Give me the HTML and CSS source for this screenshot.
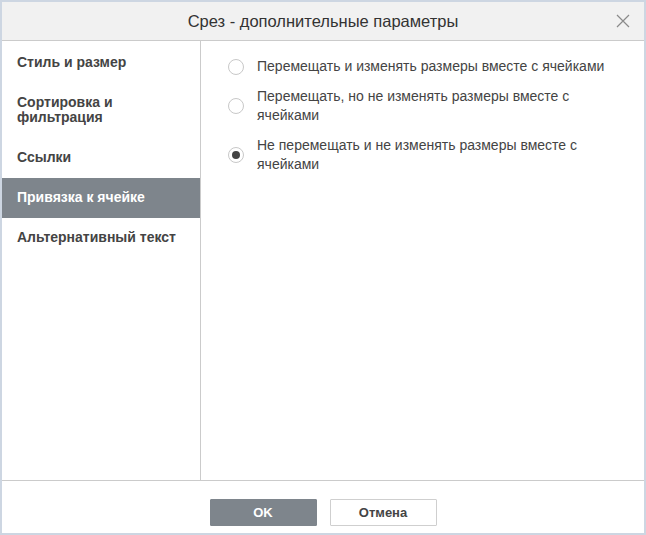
FILE: index.html
```html
<!DOCTYPE html>
<html lang="ru">

<head>
    <meta charset="UTF-8">
    <meta name="viewport" content="width=device-width, initial-scale=1.0">
    <title>Срез - дополнительные параметры</title>
    <link rel="stylesheet" href="styles.css">
</head>

<body>
    <div class="window">
        <div class="header">
            <span class="title">Срез - дополнительные параметры</span>
            <span class="close">
                <svg width="14" height="14" viewBox="0 0 14 14">
                    <path d="M1 1 L13 13 M13 1 L1 13" stroke="#8a8a8a" stroke-width="1.2" fill="none" />
                </svg>
            </span>
        </div>

        <div class="main">
            <ul class="side">
                <li>Стиль и размер</li>
                <li>Сортировка и<br>фильтрация</li>
                <li>Ссылки</li>
                <li class="active">Привязка к ячейке</li>
                <li>Альтернативный текст</li>
            </ul>

            <div class="content">
                <label class="option">
                    <span class="radio"></span>
                    <span class="text">Перемещать и изменять размеры вместе с ячейками</span>
                </label>
                <label class="option">
                    <span class="radio"></span>
                    <span class="text">Перемещать, но не изменять размеры вместе с ячейками</span>
                </label>
                <label class="option">
                    <span class="radio checked"></span>
                    <span class="text">Не перемещать и не изменять размеры вместе с ячейками</span>
                </label>
            </div>
        </div>

        <div class="footer">
            <button type="button" class="btn primary">OK</button>
            <button type="button" class="btn">Отмена</button>
        </div>
    </div>
</body>

</html>
```

FILE: styles.css
```css
body {
    margin: 0;
    padding: 0;
    background-color: #cdd6e2;
    font-family: Arial, "Liberation Sans", sans-serif;
    color: #444;
}

.window {
    margin: 2px;
    height: 531px;
    background: white;
    display: flex;
    flex-direction: column;
}

.header {
    height: 38px;
    background-color: #f1f1f1;
    border-bottom: 1px solid #cbcbcb;
    display: flex;
    align-items: center;
    justify-content: center;
    position: relative;
}

.title {
    font-size: 16.5px;
    color: #333;
}

.close {
    position: absolute;
    right: 14px;
    top: 12px;
    display: flex;
}

.main {
    flex: 1;
    display: flex;
}

.side {
    list-style: none;
    margin: 0;
    padding: 2px 0 0 0;
    width: 198px;
    border-right: 1px solid #cbcbcb;
}

.side li {
    font-size: 14px;
    font-weight: bold;
    line-height: 15px;
    padding: 12px 10px 13px 15px;
}

.side li.active {
    background-color: #7e858c;
    color: white;
}

.content {
    flex: 1;
    padding: 16px 30px 0 27px;
    display: flex;
    flex-direction: column;
    gap: 11px;
}

.option {
    display: flex;
    align-items: center;
    gap: 13px;
    font-size: 14px;
    line-height: 19px;
}

.radio {
    flex: none;
    width: 14px;
    height: 14px;
    border: 1px solid #c8c8c8;
    border-radius: 50%;
    display: flex;
    align-items: center;
    justify-content: center;
}

.radio.checked::after {
    content: "";
    width: 8px;
    height: 8px;
    border-radius: 50%;
    background: #444;
}

.footer {
    height: 53px;
    border-top: 1px solid #cbcbcb;
    display: flex;
    justify-content: center;
    align-items: flex-start;
    gap: 13px;
    padding-top: 18px;
    box-sizing: border-box;
}

.btn {
    width: 107px;
    height: 27px;
    font-family: Arial, "Liberation Sans", sans-serif;
    font-size: 13px;
    font-weight: bold;
    color: #444;
    background: white;
    border: 1px solid #cfcfcf;
    border-radius: 1px;
    cursor: pointer;
}

.btn.primary {
    background: #7e858c;
    border-color: #7e858c;
    color: white;
}
```
